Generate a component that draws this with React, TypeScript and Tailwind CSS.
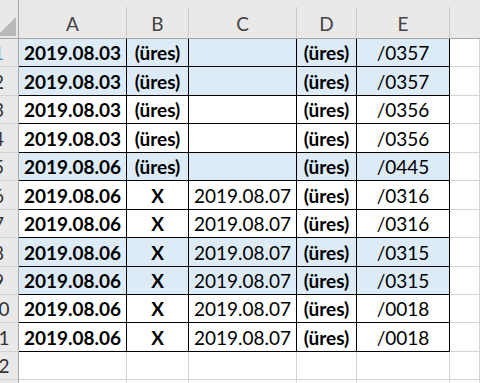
import React from "react";

type Row = {
  a: string;
  b: string;
  c: string;
  d: string;
  e: string;
  blue: boolean;
};

const rows: Row[] = [
  { a: "2019.08.03", b: "(üres)", c: "", d: "(üres)", e: "/0357", blue: true },
  { a: "2019.08.03", b: "(üres)", c: "", d: "(üres)", e: "/0357", blue: true },
  { a: "2019.08.03", b: "(üres)", c: "", d: "(üres)", e: "/0356", blue: false },
  { a: "2019.08.03", b: "(üres)", c: "", d: "(üres)", e: "/0356", blue: false },
  { a: "2019.08.06", b: "(üres)", c: "", d: "(üres)", e: "/0445", blue: true },
  { a: "2019.08.06", b: "X", c: "2019.08.07", d: "(üres)", e: "/0316", blue: false },
  { a: "2019.08.06", b: "X", c: "2019.08.07", d: "(üres)", e: "/0316", blue: false },
  { a: "2019.08.06", b: "X", c: "2019.08.07", d: "(üres)", e: "/0315", blue: true },
  { a: "2019.08.06", b: "X", c: "2019.08.07", d: "(üres)", e: "/0315", blue: true },
  { a: "2019.08.06", b: "X", c: "2019.08.07", d: "(üres)", e: "/0018", blue: false },
  { a: "2019.08.06", b: "X", c: "2019.08.07", d: "(üres)", e: "/0018", blue: false },
];

const heights = [
  "h-[28px]",
  "h-[29px]",
  "h-[28px]",
  "h-[29px]",
  "h-[28px]",
  "h-[29px]",
  "h-[28px]",
  "h-[29px]",
  "h-[28px]",
  "h-[28px]",
  "h-[29px]",
  "h-[28px]",
  "h-[28px]",
];

function RowHeader({ n, h }: { n: number; h: string }) {
  return (
    <div
      className={`${h} w-[40px] -ml-[21px] shrink-0 bg-[#e9e9e9] border-r border-b border-r-[#a6a6a6] border-b-[#d2d2d2] flex items-center justify-center pt-[2px] text-[19px] ${
        n === 1 ? "text-[#4a7fc0]" : "text-[#333333]"
      }`}
    >
      {n}
    </div>
  );
}

function Cell({
  w,
  h,
  text,
  bold,
  blue,
  table,
}: {
  w: string;
  h: string;
  text: string;
  bold?: boolean;
  blue?: boolean;
  table: boolean;
}) {
  return (
    <div
      className={`${w} ${h} shrink-0 border-r border-b flex items-center justify-center pt-[2px] text-[19px] text-black whitespace-nowrap overflow-hidden ${
        table ? "border-black" : "border-[#d4d4d4]"
      } ${blue ? "bg-[#ddebf7]" : "bg-white"} ${bold ? "font-bold" : "font-normal"}`}
    >
      {text}
    </div>
  );
}

function HeaderCell({ w, label }: { w: string; label: string }) {
  return (
    <div className={`${w} h-full shrink-0 flex flex-col`}>
      <div className="h-[10px]" />
      <div className="flex-1 border-r border-[#c9c9c9] flex items-center justify-center pt-[3px] text-[19px] text-[#444444]">
        {label}
      </div>
    </div>
  );
}

export default function App() {
  return (
    <div
      className="w-[480px] h-[383px] overflow-hidden bg-white flex flex-col"
      style={{ fontFamily: "Lato, 'Open Sans', sans-serif" }}
    >
      {/* Column header */}
      <div className="h-[39px] shrink-0 flex bg-[#e9e9e9] border-b border-[#a6a6a6]">
        <div className="w-[40px] -ml-[21px] h-full shrink-0 border-r border-[#a6a6a6] relative">
          <svg
            className="absolute left-0 top-0"
            width="40"
            height="39"
            viewBox="0 0 40 39"
          >
            <polygon points="37,17 37,36 18,36" fill="#b8b8b8" />
          </svg>
        </div>
        <HeaderCell w="w-[108px]" label="A" />
        <HeaderCell w="w-[62px]" label="B" />
        <HeaderCell w="w-[108px]" label="C" />
        <HeaderCell w="w-[60px]" label="D" />
        <HeaderCell w="w-[93px]" label="E" />
        <div className="flex-1" />
      </div>

      {rows.map((r, i) => {
        const h = heights[i];
        return (
          <div key={i} className="flex shrink-0">
            <RowHeader n={i + 1} h={h} />
            <Cell w="w-[108px]" h={h} text={r.a} bold blue={r.blue} table />
            <Cell w="w-[62px]" h={h} text={r.b} bold blue={r.blue} table />
            <Cell w="w-[108px]" h={h} text={r.c} blue={r.blue} table />
            <Cell w="w-[60px]" h={h} text={r.d} bold blue={r.blue} table />
            <Cell w="w-[93px]" h={h} text={r.e} blue={r.blue} table />
            <Cell w="flex-1" h={h} text="" table={false} />
          </div>
        );
      })}

      {[12, 13].map((n, j) => {
        const h = heights[11 + j];
        return (
          <div key={n} className="flex shrink-0">
            <RowHeader n={n} h={h} />
            <Cell w="w-[108px]" h={h} text="" table={false} />
            <Cell w="w-[62px]" h={h} text="" table={false} />
            <Cell w="w-[108px]" h={h} text="" table={false} />
            <Cell w="w-[60px]" h={h} text="" table={false} />
            <Cell w="w-[93px]" h={h} text="" table={false} />
            <Cell w="flex-1" h={h} text="" table={false} />
          </div>
        );
      })}
    </div>
  );
}
